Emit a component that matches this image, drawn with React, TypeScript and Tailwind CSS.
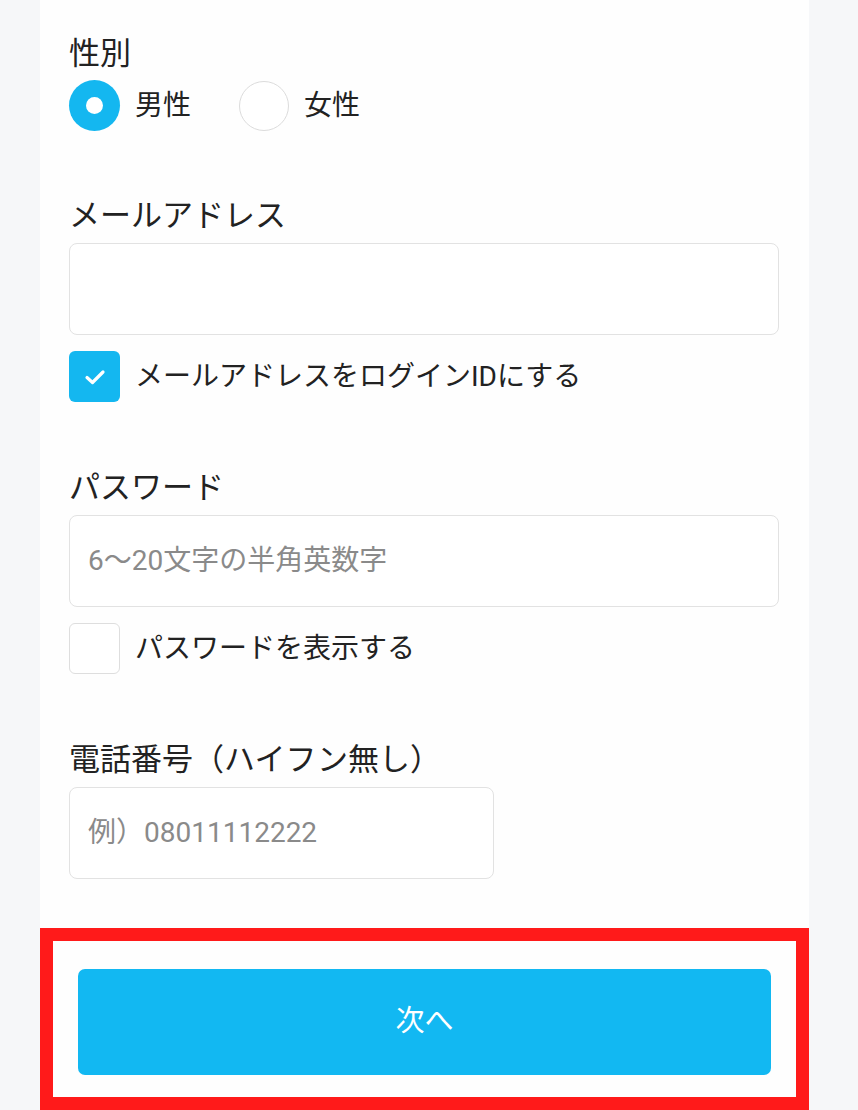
import { useState } from "react";

const font = { fontFamily: "Roboto, 'Noto Sans CJK JP', sans-serif" };

function Label({ children }: { children: React.ReactNode }) {
    return <div className="h-[40px] text-[31px] leading-[42px] text-[#222]">{children}</div>;
}

function CheckBox({ checked, label }: { checked: boolean; label: string }) {
    return (
        <div className="mt-[16px] flex h-[51px] items-center gap-[15px]">
            {checked ? (
                <div className="flex h-[51px] w-[51px] items-center justify-center rounded-[6px] bg-[#14b7f0]">
                    <svg width="22" height="18" viewBox="0 0 22 18" fill="none">
                        <path d="M3 9.5l5.5 5L19 4" stroke="white" strokeWidth="3.2" strokeLinecap="round" strokeLinejoin="round" />
                    </svg>
                </div>
            ) : (
                <div className="h-[51px] w-[51px] rounded-[6px] border-[1.5px] border-[#dedede] bg-white" />
            )}
            <span className="text-[28px] text-[#222]">{label}</span>
        </div>
    );
}

export default function App() {
    const [gender] = useState("male");

    return (
        <div className="min-h-[1110px] bg-[#f6f7f9]" style={font}>
            <div className="ml-[40px] w-[769px] bg-[#fefefe] pt-[33px]">
                <div className="px-[29px]">
                    {/* gender */}
                    <Label>性別</Label>
                    <div className="mt-[7px] flex h-[51px] items-center">
                        <div className="flex items-center gap-[15px]">
                            <div className="flex h-[51px] w-[51px] items-center justify-center rounded-full bg-[#14b7f0]">
                                <div className="h-[17px] w-[17px] rounded-full bg-white" />
                            </div>
                            <span className="text-[28px] text-[#222]">男性</span>
                        </div>
                        <div className="ml-[48px] flex items-center gap-[15px]">
                            <div
                                className={`h-[50px] w-[50px] rounded-full border-[1.5px] bg-white ${gender === "female" ? "border-[#14b7f0]" : "border-[#dcdcdc]"}`}
                            />
                            <span className="text-[28px] text-[#222]">女性</span>
                        </div>
                    </div>

                    {/* email */}
                    <div className="mt-[64px]">
                        <Label>メールアドレス</Label>
                        <div className="mt-[8px] h-[92px] w-[710px] rounded-[8px] border-[1.5px] border-[#e2e2e2] bg-white" />
                        <CheckBox checked label="メールアドレスをログインIDにする" />
                    </div>

                    {/* password */}
                    <div className="mt-[65px]">
                        <Label>パスワード</Label>
                        <div className="mt-[8px] flex h-[92px] w-[710px] items-center rounded-[8px] border-[1.5px] border-[#e2e2e2] bg-white px-[18px] text-[28px] text-[#8a8a8a]">
                            6〜20文字の半角英数字
                        </div>
                        <CheckBox checked={false} label="パスワードを表示する" />
                    </div>

                    {/* phone */}
                    <div className="mt-[65px]">
                        <Label>電話番号（ハイフン無し）</Label>
                        <div className="mt-[8px] flex h-[92px] w-[425px] items-center rounded-[8px] border-[1.5px] border-[#e2e2e2] bg-white px-[18px] text-[28px] text-[#8a8a8a]">
                            例）08011112222
                        </div>
                    </div>
                </div>

                {/* next button area */}
                <div className="mt-[49px] border-[13px] border-[#ff1a1a] bg-[#fefefe] pb-[22px] pl-[25px] pr-[25px] pt-[28px]">
                    <button className="flex h-[106px] w-full items-center justify-center rounded-[7px] bg-[#12b8f2] text-[29px] text-white">
                        次へ
                    </button>
                </div>
            </div>
        </div>
    );
}
